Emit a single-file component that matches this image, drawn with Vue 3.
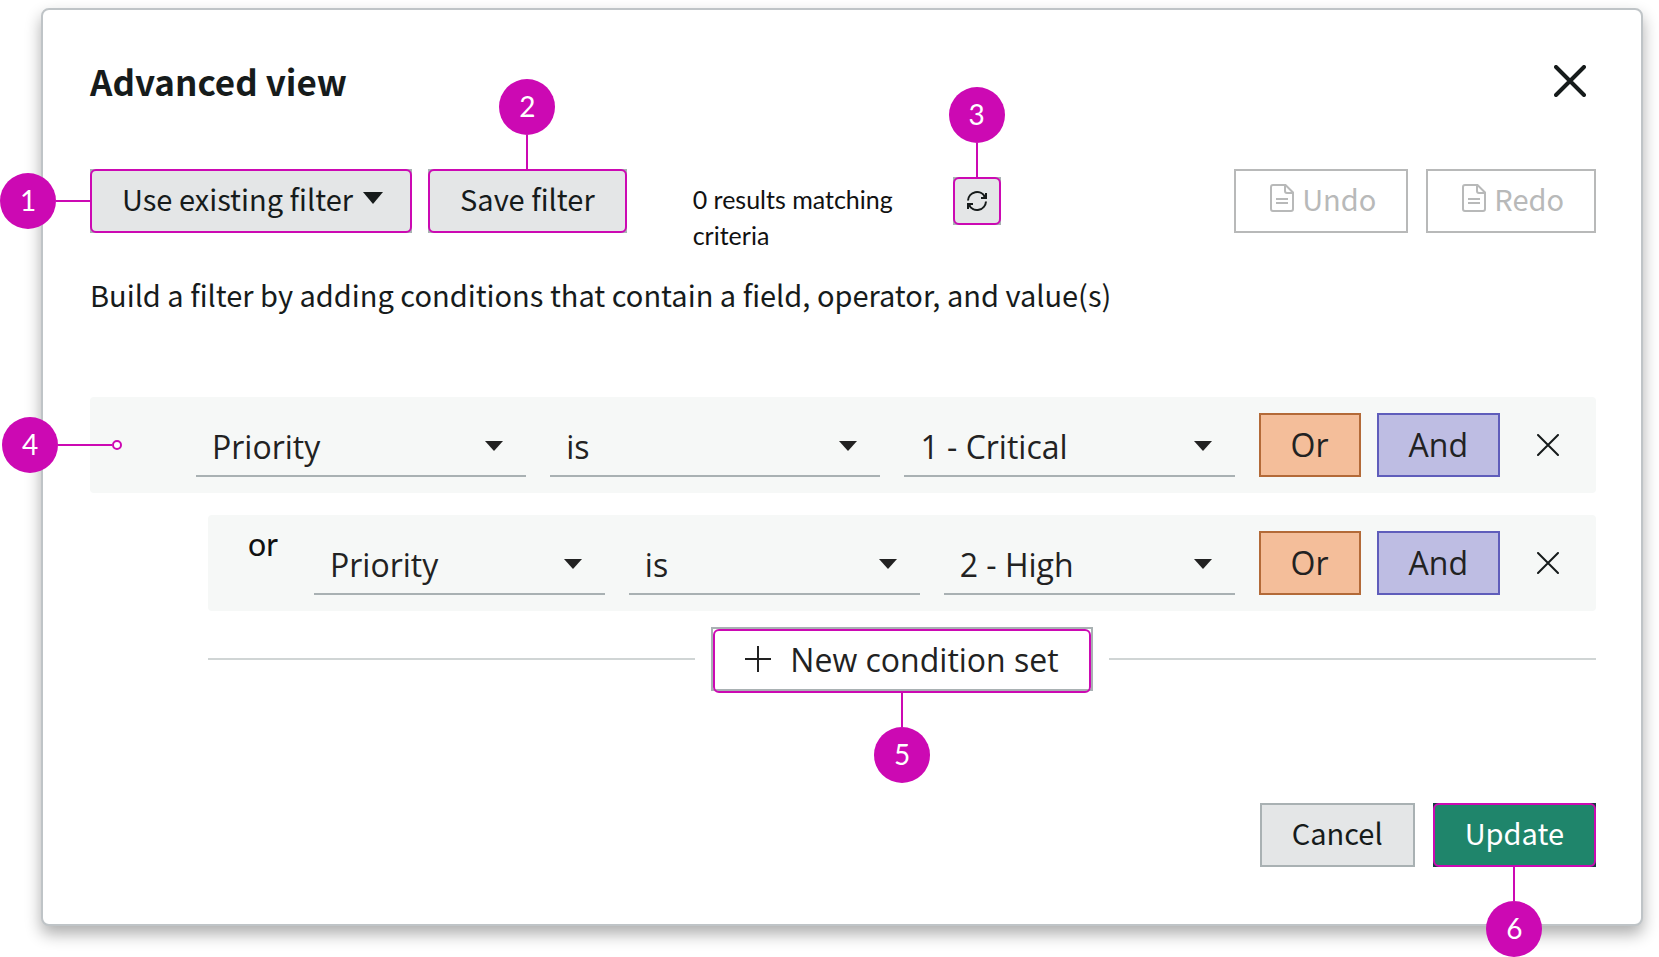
<script setup>
import { ref } from 'vue';

const fields = ['Priority', 'State', 'Category'];
const operators = ['is', 'is not', 'is one of'];
const values = ['1 - Critical', '2 - High', '3 - Moderate', '4 - Low'];

let nextId = 3;
const conditions = ref([
    { id: 1, joiner: '', field: 'Priority', operator: 'is', value: '1 - Critical' },
    { id: 2, joiner: 'or', field: 'Priority', operator: 'is', value: '2 - High' },
]);

function addCondition(index, joiner) {
    conditions.value.splice(index + 1, 0, {
        id: nextId++,
        joiner,
        field: fields[0],
        operator: operators[0],
        value: values[0],
    });
}

function removeCondition(index) {
    conditions.value.splice(index, 1);
}
</script>

<template>
    <main class="page">
        <section class="modal" role="dialog" aria-labelledby="modal-title">
            <header class="modal-header">
                <h1 id="modal-title">Advanced view</h1>
                <button type="button" class="icon-btn close-btn" aria-label="Close">
                    <svg width="32" height="32" viewBox="0 0 32 32">
                        <path d="M2 2L30 30M30 2L2 30" stroke-width="4" />
                    </svg>
                </button>
            </header>

            <div class="toolbar">
                <div class="anchor">
                    <button type="button" class="btn btn-grey btn-dropdown marked">
                        Use existing filter
                        <svg class="btn-caret" width="20" height="12" viewBox="0 0 20 12">
                            <path d="M0 0H20L10 12Z" />
                        </svg>
                    </button>
                    <span class="callout callout-left"><span class="badge">1</span></span>
                </div>
                <div class="anchor">
                    <button type="button" class="btn btn-grey marked">Save filter</button>
                    <span class="callout callout-top"><span class="badge">2</span></span>
                </div>
                <p class="results">0 results matching criteria</p>
                <div class="anchor refresh">
                    <button type="button" class="btn btn-grey btn-small marked" aria-label="Refresh">
                        <svg width="20" height="20" viewBox="0 0 20 20">
                            <path class="line" d="M1 9.5A9 9 0 0 1 18 6M19 10.5A9 9 0 0 1 2 14" />
                            <path d="M20 2V8H14V6H16L18 4V2ZM0 18V12H6V14H4L2 16V18Z" />
                        </svg>
                    </button>
                    <span class="callout callout-top"><span class="badge">3</span></span>
                </div>
                <div class="history">
                    <button
                        v-for="label in ['Undo', 'Redo']"
                        :key="label"
                        type="button"
                        class="btn btn-outline"
                        disabled
                    >
                        <svg class="doc-icon" width="24" height="28" viewBox="0 0 24 28">
                            <path
                                d="M3 1H15.5L23 8.5V25A2 2 0 0 1 21 27H3A2 2 0 0 1 1 25V3A2 2 0 0 1 3 1ZM15 1V7A2 2 0 0 0 17 9H23M6 15H18M6 19H18"
                            />
                        </svg>
                        {{ label }}
                    </button>
                </div>
            </div>

            <p class="intro">
                Build a filter by adding conditions that contain a field, operator, and value(s)
            </p>

            <div class="conditions">
                <div
                    v-for="(condition, i) in conditions"
                    :key="condition.id"
                    class="condition"
                    :class="{ nested: condition.joiner }"
                >
                    <span v-if="i === 0" class="callout callout-row">
                        <span class="badge">4</span>
                    </span>
                    <span class="joiner">{{ condition.joiner }}</span>
                    <div class="select">
                        <select v-model="condition.field" aria-label="Field">
                            <option v-for="f in fields" :key="f">{{ f }}</option>
                        </select>
                        <svg class="select-caret" width="18" height="10" viewBox="0 0 18 10">
                            <path d="M0 0H18L9 10Z" />
                        </svg>
                    </div>
                    <div class="select">
                        <select v-model="condition.operator" aria-label="Operator">
                            <option v-for="o in operators" :key="o">{{ o }}</option>
                        </select>
                        <svg class="select-caret" width="18" height="10" viewBox="0 0 18 10">
                            <path d="M0 0H18L9 10Z" />
                        </svg>
                    </div>
                    <div class="select">
                        <select v-model="condition.value" aria-label="Value">
                            <option v-for="v in values" :key="v">{{ v }}</option>
                        </select>
                        <svg class="select-caret" width="18" height="10" viewBox="0 0 18 10">
                            <path d="M0 0H18L9 10Z" />
                        </svg>
                    </div>
                    <div class="joins">
                        <button type="button" class="join join-or" @click="addCondition(i, 'or')">
                            Or
                        </button>
                        <button type="button" class="join join-and" @click="addCondition(i, 'and')">
                            And
                        </button>
                    </div>
                    <button
                        type="button"
                        class="icon-btn remove-btn"
                        aria-label="Remove condition"
                        @click="removeCondition(i)"
                    >
                        <svg width="22" height="22" viewBox="0 0 22 22">
                            <path d="M1 1L21 21M21 1L1 21" stroke-width="2" />
                        </svg>
                    </button>
                </div>
            </div>

            <div class="new-set">
                <div class="anchor">
                    <button type="button" class="new-btn">
                        <svg width="26" height="26" viewBox="0 0 26 26">
                            <path d="M13 0V26M0 13H26" />
                        </svg>
                        New condition set
                    </button>
                    <span class="callout callout-bottom"><span class="badge">5</span></span>
                </div>
            </div>

            <footer class="actions">
                <button type="button" class="btn btn-grey">Cancel</button>
                <div class="anchor">
                    <button type="button" class="btn btn-primary marked">Update</button>
                    <span class="callout callout-bottom"><span class="badge">6</span></span>
                </div>
            </footer>
        </section>
    </main>
</template>

<style>
body {
    margin: 0;
    background: #fff;
}
</style>

<style scoped>
.page {
    --ink: #161b1b;
    --mark: #cc09b3;
    --ui-font: 'Noto Sans CJK SC', 'Noto Sans', sans-serif;
    --field-font: 'Open Sans', 'Noto Sans', sans-serif;
    --round-font: Lato, sans-serif;
    padding: 8px 16px 31px 41px;
    color: var(--ink);
    font-family: var(--ui-font);
    font-size: 29px;
}

.page,
.page *,
.page *::before,
.page *::after {
    box-sizing: border-box;
}

.modal {
    padding: 43px 45px 57px 47px;
    border: 2px solid #bfc4c7;
    border-radius: 8px;
    background: #fff;
    box-shadow: 0 8px 16px rgba(0, 0, 0, 0.32);
}

h1,
p {
    margin: 0;
}

button,
select {
    margin: 0;
    font: inherit;
    color: inherit;
    cursor: pointer;
}

.modal-header {
    display: flex;
    align-items: center;
    justify-content: space-between;
    height: 56px;
}

h1 {
    font-size: 35px;
    font-weight: 600;
    line-height: 56px;
}

.icon-btn {
    display: flex;
    align-items: center;
    justify-content: center;
    padding: 0;
    border: 0;
    background: none;
}

.icon-btn path {
    fill: none;
    stroke: currentColor;
    stroke-linecap: round;
}

.close-btn {
    width: 52px;
    height: 52px;
}

.toolbar {
    display: flex;
    align-items: flex-start;
    gap: 16px;
    margin-top: 60px;
}

.anchor {
    position: relative;
    flex: none;
}

.btn {
    position: relative;
    display: flex;
    align-items: center;
    height: 64px;
    padding: 0 30px 6px;
    border: 2px solid #a9b1b3;
    background: #e4e6e7;
    line-height: 40px;
    white-space: nowrap;
}

.btn svg {
    fill: currentColor;
}

.btn-dropdown {
    padding-right: 27px;
}

.btn-caret {
    margin-left: 10px;
}

.btn-small {
    justify-content: center;
    width: 48px;
    height: 48px;
    padding: 0;
}

.btn-small .line {
    fill: none;
    stroke: currentColor;
    stroke-width: 2;
}

.btn-outline {
    border-color: #b8b9b9;
    background: #fff;
    color: #b8b9b9;
    cursor: default;
}

.btn .doc-icon {
    margin: 0 8px 0 4px;
    fill: none;
    stroke: currentColor;
    stroke-width: 2;
}

.btn-primary {
    border-color: #17383f;
    background: #1f856b;
    color: #fff;
}

/* Highlight ring drawn over the control's own border */
.marked::after {
    content: '';
    position: absolute;
    inset: -2px;
    border: 2px solid var(--mark);
    border-radius: 6px;
}

.results {
    width: 228px;
    margin: 12px 16px 0 50px;
    color: #111;
    font-family: var(--round-font);
    font-size: 25px;
    line-height: 36px;
}

.refresh {
    margin-top: 8px;
}

.history {
    display: flex;
    gap: 18px;
    margin-left: auto;
}

.intro {
    margin-top: 21px;
    line-height: 40px;
}

.conditions {
    display: grid;
    gap: 22px;
    margin-top: 83px;
}

.condition {
    position: relative;
    display: flex;
    gap: 24px;
    padding: 16px 24px 16px 0;
    border-radius: 4px;
    background: #f6f8f7;
}

.condition.nested {
    margin-left: 118px;
}

.joiner {
    flex: none;
    width: 82px;
    padding-left: 40px;
    color: #111;
    font-family: var(--round-font);
    font-size: 32px;
    line-height: 26px;
}

.select {
    position: relative;
    flex: 1;
    min-width: 0;
}

select {
    appearance: none;
    width: 100%;
    height: 64px;
    padding: 4px 48px 0 16px;
    border: 0;
    border-bottom: 2px solid #a9b1b3;
    border-radius: 0;
    background: transparent;
    color: #222;
    font-family: var(--field-font);
    font-size: 32px;
}

.select-caret {
    position: absolute;
    top: 28px;
    right: 23px;
    fill: #222;
    pointer-events: none;
}

.joins {
    display: flex;
    gap: 16px;
}

.join {
    height: 64px;
    padding: 0 30px;
    border: 2px solid;
    color: #222;
    font-family: var(--field-font);
    font-size: 32px;
    line-height: 60px;
}

.join-or {
    border-color: #b36a38;
    background: #f4be9a;
}

.join-and {
    border-color: #5f5dbb;
    background: #bebde3;
}

.remove-btn {
    width: 48px;
    height: 64px;
}

.new-set {
    display: flex;
    align-items: center;
    gap: 16px;
    margin: 16px 0 0 118px;
}

.new-set::before,
.new-set::after {
    content: '';
    flex: 1;
    height: 2px;
    background: #d0d5d5;
}

.new-btn {
    position: relative;
    display: flex;
    align-items: center;
    gap: 19px;
    height: 64px;
    padding: 0 32px;
    border: 2px solid #a9b1b3;
    background: #fff;
    color: #222;
    font-family: var(--field-font);
    font-size: 32px;
}

.new-btn path {
    stroke: currentColor;
    stroke-width: 2;
}

.new-btn::after {
    content: '';
    position: absolute;
    inset: 0 0 -4px;
    border: 2px solid var(--mark);
    border-radius: 6px;
}

.actions {
    display: flex;
    justify-content: flex-end;
    gap: 18px;
    margin-top: 112px;
}

/* Numbered callouts: a badge joined to its control by a stem */
.callout {
    position: absolute;
    display: flex;
    align-items: center;
}

.callout::after {
    content: '';
    flex: none;
    width: 2px;
    height: 34px;
    background: var(--mark);
}

.badge {
    flex: none;
    width: 56px;
    height: 56px;
    border-radius: 50%;
    background: var(--mark);
    color: #fff;
    font-family: var(--round-font);
    font-size: 28px;
    line-height: 54px;
    text-align: center;
}

.callout-top {
    bottom: 100%;
    left: 50%;
    flex-direction: column;
    transform: translateX(-50%);
}

.callout-bottom {
    top: 100%;
    left: 50%;
    flex-direction: column-reverse;
    transform: translateX(-50%);
}

/* The ring of this button hangs below its border */
.new-set .callout-bottom {
    top: calc(100% + 2px);
}

.callout-left {
    top: 4px;
    right: 100%;
}

.callout-left::after {
    width: 34px;
    height: 2px;
}

.callout-row {
    top: 20px;
    left: -88px;
}

.callout-row::after {
    width: 54px;
    height: 2px;
}

.callout-row::before {
    content: '';
    order: 1;
    width: 10px;
    height: 10px;
    border: 2px solid var(--mark);
    border-radius: 50%;
    background: #fff;
}
</style>
